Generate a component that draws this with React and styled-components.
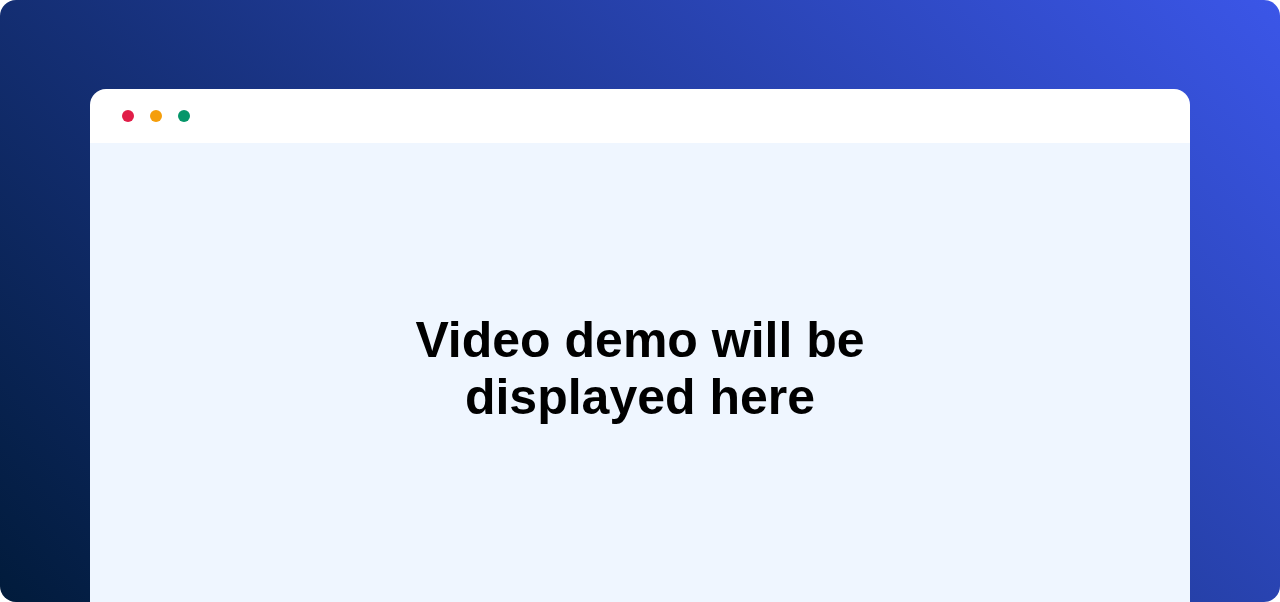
import styled, { createGlobalStyle } from "styled-components";

const GlobalStyle = createGlobalStyle`
  html, body {
    margin: 0;
    padding: 0;
    background: #ffffff;
  }
  * {
    box-sizing: border-box;
  }
`;

const Stage = styled.section`
  width: 1280px;
  height: 602px;
  padding: 89px 90px 0;
  border-radius: 16px;
  overflow: hidden;
  background: linear-gradient(45deg, #011b3b 0%, #3b56e8 100%);
  font-family: "Liberation Sans", Arial, sans-serif;
`;

const Window = styled.div`
  width: 1100px;
  border-radius: 16px 16px 0 0;
  overflow: hidden;
  display: flex;
  flex-direction: column;
`;

const TitleBar = styled.div`
  height: 54px;
  padding: 0 32px;
  background: #ffffff;
  display: flex;
  align-items: center;
  gap: 16px;
`;

const Dot = styled.span`
  width: 12px;
  height: 12px;
  border-radius: 50%;
  background: ${(p) => p.$color};
`;

const Screen = styled.div`
  height: 459px;
  padding-bottom: 8px;
  background: #eff6ff;
  display: flex;
  align-items: center;
  justify-content: center;
`;

const Placeholder = styled.h2`
  margin: 0;
  font-size: 50px;
  line-height: 57px;
  font-weight: 700;
  color: #000000;
  text-align: center;
`;

const dots = ["#e11d48", "#f59e0b", "#059669"];

const App = () => {
  return (
    <>
      <GlobalStyle />
      <Stage>
        <Window>
          <TitleBar>
            {dots.map((c) => (
              <Dot key={c} $color={c} />
            ))}
          </TitleBar>
          <Screen>
            <Placeholder>
              Video demo will be
              <br />
              displayed here
            </Placeholder>
          </Screen>
        </Window>
      </Stage>
    </>
  );
};

export default App;
